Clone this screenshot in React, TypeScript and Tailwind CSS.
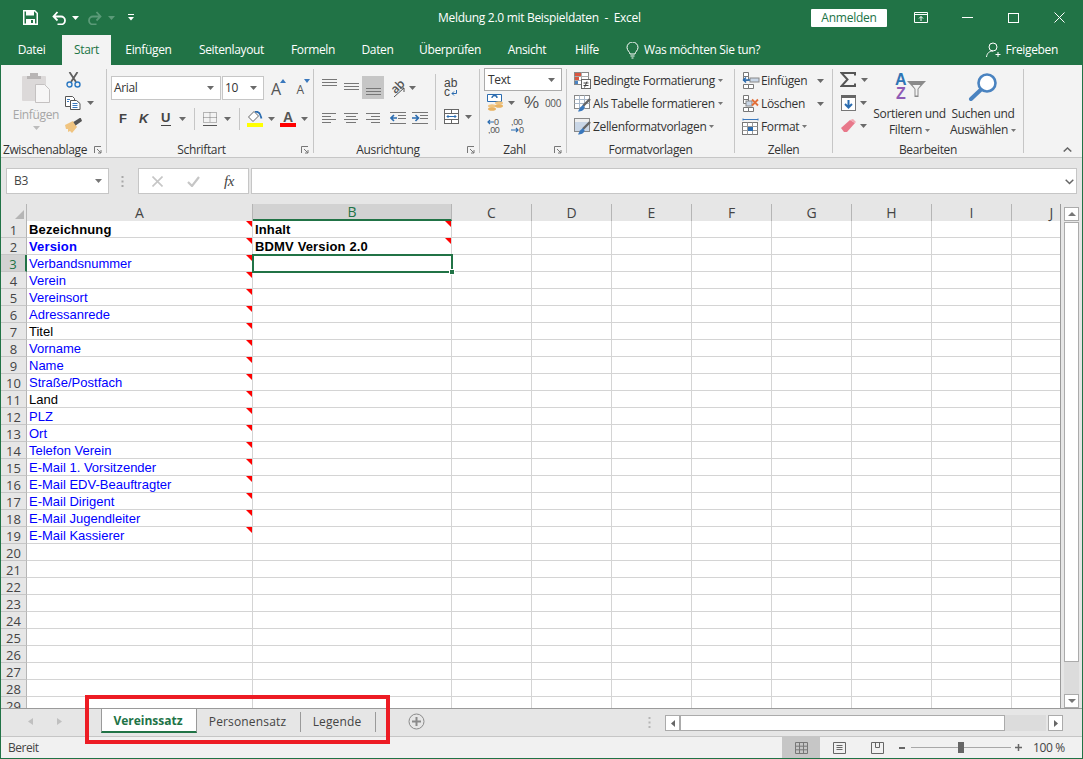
import type { ReactNode } from 'react'

const tabs = [
  { label: 'Datei', w: 'w-[61px]' },
  { label: 'Start', w: 'w-[49px]', active: true },
  { label: 'Einfügen', w: 'w-[75px]' },
  { label: 'Seitenlayout', w: 'w-[91px]' },
  { label: 'Formeln', w: 'w-[72px]' },
  { label: 'Daten', w: 'w-[57px]' },
  { label: 'Überprüfen', w: 'w-[88px]' },
  { label: 'Ansicht', w: 'w-[66px]' },
  { label: 'Hilfe', w: 'w-[54px]' },
]

const rows = [
  'Bezeichnung', 'Version', 'Verbandsnummer', 'Verein', 'Vereinsort', 'Adressanrede', 'Titel', 'Vorname', 'Name',
  'Straße/Postfach', 'Land', 'PLZ', 'Ort', 'Telefon Verein', 'E-Mail 1. Vorsitzender', 'E-Mail EDV-Beauftragter',
  'E-Mail Dirigent', 'E-Mail Jugendleiter', 'E-Mail Kassierer',
]

const otherCols = ['C', 'D', 'E', 'F', 'G', 'H', 'I', 'J']

function Caret({ color = '#6a6a6a', small }: { color?: string; small?: boolean }) {
  return (
    <svg width={small ? 5 : 7} height={small ? 3 : 4} viewBox="0 0 7 4" className="shrink-0">
      <polygon points="0,0 7,0 3.5,4" fill={color} />
    </svg>
  )
}

function Launcher() {
  return (
    <svg width="8" height="8" viewBox="0 0 8 8" className="shrink-0">
      <path d="M.5 7V.5H7M3 3l4 4M7 4v3H4" fill="none" stroke="#777" />
    </svg>
  )
}

function Sep() {
  return <div className="my-[4px] w-px shrink-0 bg-[#c6c6c6]" />
}

function Group({ w, label, launcher, children }: { w: string; label: string; launcher?: boolean; children: ReactNode }) {
  return (
    <div className={`flex shrink-0 flex-col ${w}`}>
      <div className="h-[76px]">{children}</div>
      <div className="flex h-[16px] items-center pt-[2px] text-[12px] leading-none text-[#333]">
        <span className="flex-1 text-center">{label}</span>
        {launcher && (
          <span className="flex w-[17px] justify-start pl-[5px]">
            <Launcher />
          </span>
        )}
      </div>
    </div>
  )
}

function LinesV({ y }: { y: number }) {
  return (
    <svg width="15" height="23" viewBox="0 0 15 23" className="shrink-0">
      <path d={`M0 ${y + 0.5}h15M0 ${y + 3.5}h15M0 ${y + 6.5}h15`} stroke="#777" />
    </svg>
  )
}

function LinesH({ d }: { d: string }) {
  return (
    <svg width="14" height="11" viewBox="0 0 14 11" className="shrink-0">
      <path d={d} stroke="#777" />
    </svg>
  )
}

function Indent({ flip }: { flip?: boolean }) {
  return (
    <svg width="16" height="12" viewBox="0 0 16 12" className="shrink-0">
      <path d="M0 .5h16M8 3.5h8M8 6.5h8M0 11.5h16" stroke="#777" />
      <path d={flip ? 'M0 6h6M3.5 3l3 3-3 3' : 'M7 6H1M4 3 1 6l3 3'} fill="none" stroke="#2b6cb0" strokeWidth="1.6" />
    </svg>
  )
}

function CondIcon() {
  return (
    <svg width="17" height="17" viewBox="0 0 17 17" className="shrink-0">
      <rect x=".5" y=".5" width="14" height="12" fill="#fff" stroke="#888" />
      <rect x="1" y="1" width="6" height="3" fill="#d9553f" />
      <rect x="1" y="4" width="4" height="4" fill="#d9553f" />
      <rect x="1" y="8" width="3" height="4" fill="#4a84c4" />
      <path d="M7.5.5v12M.5 4.5h14M.5 8.5h14" stroke="#aaa" />
      <rect x="7.5" y="7.5" width="9" height="9" fill="#fff" stroke="#666" />
      <path d="M9.5 11h5M9.5 13.5h5M13 9.5l-2.500 6" stroke="#444" />
    </svg>
  )
}

function TableIcon({ filled }: { filled?: boolean }) {
  return (
    <svg width="17" height="17" viewBox="0 0 17 17" className="shrink-0">
      <rect x=".5" y=".5" width="15" height="13" fill={filled ? '#c9d6e6' : '#fff'} stroke="#888" />
      {filled ? (
        <rect x="1" y="1" width="14" height="3" fill="#eee" />
      ) : (
        <path d="M5.500.5v13M10.500.5v13M.5 4.500h15M.5 8.500h15" stroke="#a9b8c9" />
      )}
      <path d="M16 4 9 11" stroke="#666" strokeWidth="2.400" />
      <path d="M9 10l-3 2.500L4 16.500c3 0 6-1 6.500-4z" fill="#3a78bd" />
    </svg>
  )
}

function CellsIcon({ kind }: { kind: 'add' | 'del' | 'fmt' }) {
  return (
    <svg width="18" height="17" viewBox="0 0 18 17" className="shrink-0">
      {kind === 'fmt' ? (
        <>
          <path d="M1 1.500h15M1 .5v2M16 .5v2" stroke="#3a78bd" />
          <rect x=".5" y="4.500" width="15" height="12" fill="#fff" stroke="#777" />
          <path d="M5.500 4.500v12M10.500 4.500v12M.5 8.500h15M.5 12.500h15" stroke="#999" />
          <rect x="6" y="9" width="5" height="4" fill="#2b6cb0" />
        </>
      ) : (
        <>
          <path d="M1.500.5h5v4h-5zM1.500 4.500h5v4h-5zM1.500 12.500h5v4h-5zM6.500 12.500h5v4h-5z" fill="#fff" stroke="#777" />
          {kind === 'add' ? (
            <>
              <rect x="8" y="6" width="9" height="4" fill="#c9d6e6" stroke="#888" />
              <path d="M8 8H1.500M4 5.500 1.500 8 4 10.500" fill="none" stroke="#2b6cb0" strokeWidth="1.500" />
            </>
          ) : (
            <>
              <rect x="4" y="6" width="6" height="5" fill="#c9d6e6" stroke="#888" />
              <path d="M10 4.500l6 6M16 4.500l-6 6" stroke="#e2703a" strokeWidth="1.800" />
            </>
          )}
        </>
      )}
    </svg>
  )
}

function TitleBar() {
  return (
    <div className="flex h-[35px] shrink-0 items-center bg-[#217346] text-white">
      <div className="flex w-[437px] shrink-0 items-center">
        <svg width="15" height="15" viewBox="0 0 15 15" className="ml-[22px]">
          <path d="M.75.75h11l2.5 2.5v11H.75z" fill="none" stroke="#fff" strokeWidth="1.5" />
          <path d="M3 1h8v4.500H3zM3 9h9v5H3z" fill="#fff" />
          <rect x="8" y="10" width="2" height="3" fill="#217346" />
        </svg>
        <svg width="15" height="14" viewBox="0 0 15 14" className="ml-[14px]">
          <path d="M1.500 5.500H9a4 4 0 0 1 0 8H5.500M5.500 1 1.500 5.500l4 4" fill="none" stroke="#fff" strokeWidth="1.800" />
        </svg>
        <span className="ml-[5px]">
          <Caret color="#ffffff" />
        </span>
        <svg width="15" height="14" viewBox="0 0 15 14" className="ml-[8px]">
          <path d="M13.500 5.500H6a4 4 0 0 0 0 8h3.500M9.500 1l4 4.500-4 4" fill="none" stroke="#5b9a78" strokeWidth="1.800" />
        </svg>
        <span className="ml-[6px]">
          <Caret color="#5b9a78" />
        </span>
        <svg width="6" height="7" viewBox="0 0 6 7" className="ml-[13px]">
          <path d="M0 .5h6" stroke="#fff" />
          <polygon points="0,3 6,3 3,6.5" fill="#fff" />
        </svg>
      </div>
      <div className="w-[373px] shrink-0 text-[12px] tracking-[-0.3px]">Meldung 2.0 mit Beispieldaten&nbsp; -&nbsp; Excel</div>
      <div className="flex h-[18px] w-[76px] shrink-0 items-center justify-center rounded-[1px] bg-white text-[12px] tracking-[-0.25px] text-[#217346]">Anmelden</div>
      <svg width="14" height="11" viewBox="0 0 14 11" className="ml-[27px]">
        <path d="M.5.5h13v10H.5zM.5 2.500h13M7 9V4.500M5 6.500l2-2 2 2" fill="none" stroke="#fff" />
      </svg>
      <div className="ml-[34px] h-px w-[11px] bg-white" />
      <div className="ml-[35px] h-[10px] w-[11px] border border-white" />
      <svg width="11" height="11" viewBox="0 0 11 11" className="ml-[35px]">
        <path d="M.5.5l10 10M10.500.5l-10 10" stroke="#fff" />
      </svg>
    </div>
  )
}

function TabRow() {
  return (
    <div className="flex h-[30px] shrink-0 items-stretch bg-[#217346] text-[12px] text-white">
      {tabs.map((t) => (
        <div
          key={t.label}
          className={`flex shrink-0 items-center justify-center ${t.w} ${t.active ? 'bg-[#f3f3f3] text-[#217346]' : ''}`}
        >
          {t.label}
        </div>
      ))}
      <div className="ml-[12px] flex items-center">
        <svg width="13" height="17" viewBox="0 0 13 17">
          <path d="M4 12c0-2-3-3.500-3-6.500a5.500 5.500 0 0 1 11 0C12 8.500 9 10 9 12zM4.500 14h4M5.500 16h2" fill="none" stroke="#fff" />
        </svg>
        <span className="ml-[5px]">Was möchten Sie tun?</span>
      </div>
      <div className="ml-auto flex items-center pr-[24px]">
        <svg width="16" height="16" viewBox="0 0 16 16">
          <circle cx="7" cy="5" r="4" fill="none" stroke="#fff" />
          <path d="M.5 15c.5-4 3-6 6.500-6M12 10v5M9.500 12.500h5" fill="none" stroke="#fff" />
        </svg>
        <span className="ml-[4px]">Freigeben</span>
      </div>
    </div>
  )
}

function Ribbon() {
  return (
    <div className="flex h-[92px] shrink-0 bg-[#f3f3f3] text-[12px] text-[#333]">
      <Group w="w-[105px]" label="Zwischenablage" launcher>
        <div className="flex">
          <div className="flex w-[63px] shrink-0 flex-col items-center pl-[7px] pt-[8px]">
            <svg width="29" height="30" viewBox="0 0 29 30">
              <rect x="0" y="3" width="24" height="25" rx="1" fill="#dcd9d9" />
              <path d="M8 3V0h8v3h3v3H5V3z" fill="#b8b5b5" />
              <path d="M13.500 11.500h9l5 5v13h-14z" fill="#f7f6f6" stroke="#c4c1c1" />
            </svg>
            <span className="mt-[3px] h-[16px] text-[#a6a6a6]">Einfügen</span>
            <span className="mt-[4px]">
              <Caret color="#bcbcbc" />
            </span>
          </div>
          <div className="flex flex-col pt-[3px]">
            <div className="flex h-[23px] items-center pl-[2px]">
              <svg width="15" height="16" viewBox="0 0 15 16">
                <path d="M3.500 0l6.500 10M11.500 0 5 10" stroke="#5f5f5f" strokeWidth="1.800" />
                <circle cx="3.500" cy="12.500" r="2.500" fill="none" stroke="#2b78c2" strokeWidth="1.400" />
                <circle cx="11.500" cy="12.500" r="2.500" fill="none" stroke="#2b78c2" strokeWidth="1.400" />
              </svg>
            </div>
            <div className="flex h-[23px] items-center pl-[1px]">
              <svg width="16" height="14" viewBox="0 0 16 14">
                <path d="M.5.500h7l2 2v8h-9z" fill="#fff" stroke="#555" />
                <path d="M5.500 4.500h6l3.500 3v6h-9.500z" fill="#fff" stroke="#555" />
                <path d="M7.500 7.500h5M7.500 9.500h5M7.500 11.500h5M2 3.500h3M2 5.500h2" stroke="#3a78bd" />
              </svg>
              <span className="ml-[6px]">
                <Caret />
              </span>
            </div>
            <div className="flex h-[23px] items-center pl-[1px]">
              <svg width="17" height="15" viewBox="0 0 17 15">
                <polygon points="0,7 8,3 12,9 7,15 5,13 3,14 3,11 1,11" fill="#f0c480" />
                <path d="M9 5l7-4.500M10 6.500 16.500 2" stroke="#555" strokeWidth="2.200" />
              </svg>
            </div>
          </div>
        </div>
      </Group>
      <Sep />
      <Group w="w-[206px]" label="Schriftart" launcher>
        <div className="mt-[11px] flex h-[24px] items-stretch pl-[4px]">
          <div className="flex w-[110px] items-center justify-between border border-[#c6c6c6] bg-white pl-[2px] pr-[6px] text-[12px]">
            Arial <Caret />
          </div>
          <div className="ml-px flex w-[42px] items-center justify-between border border-[#c6c6c6] bg-white pl-[2px] pr-[6px]">
            10 <Caret />
          </div>
          <div className="relative ml-[5px] w-[14px] text-center text-[16px] leading-[26px] text-[#555]">
            A
            <svg width="6" height="4" viewBox="0 0 6 4" className="absolute right-[-3px] top-[3px]">
              <polygon points="0,4 6,4 3,0" fill="#3a78bd" />
            </svg>
          </div>
          <div className="relative ml-[11px] w-[12px] text-center text-[12px] leading-[27px] text-[#555]">
            A
            <svg width="6" height="4" viewBox="0 0 6 4" className="absolute right-[-4px] top-[3px]">
              <polygon points="0,0 6,0 3,4" fill="#3a78bd" />
            </svg>
          </div>
        </div>
        <div className="mt-[7px] flex h-[23px] items-center">
          <span className="ml-[12px] w-[8px] font-['Liberation_Sans',sans-serif] text-[13px] font-bold text-[#444]">F</span>
          <span className="ml-[12px] w-[10px] font-['Liberation_Sans',sans-serif] text-[13px] font-bold italic text-[#444]">K</span>
          <span className="ml-[12px] w-[10px] border-b border-[#444] font-['Liberation_Sans',sans-serif] text-[13px] font-bold leading-[14px] text-[#444]">U</span>
          <span className="ml-[8px]">
            <Caret />
          </span>
          <div className="ml-[8px] h-[22px] w-px bg-[#c6c6c6]" />
          <svg width="14" height="14" viewBox="0 0 14 14" className="ml-[8px]">
            <path d="M.5.500h13v10h-13zM7 .500v10M.5 5.500h13" fill="none" stroke="#777" strokeDasharray="1 1" />
            <path d="M0 13.500h14" stroke="#555" />
          </svg>
          <span className="ml-[7px]">
            <Caret />
          </span>
          <div className="ml-[8px] h-[22px] w-px bg-[#c6c6c6]" />
          <div className="ml-[7px] flex w-[16px] flex-col items-center">
            <svg width="16" height="12" viewBox="0 0 16 12">
              <path d="M7 .500 1.500 6 6 10.500 11.500 5z" fill="#fff" stroke="#666" />
              <path d="M8 .500c3 0 5 2 5.500 4l1 3" fill="none" stroke="#2b6cb0" strokeWidth="1.800" />
            </svg>
            <div className="h-[4px] w-[16px] bg-[#ffff00]" />
          </div>
          <span className="ml-[5px]">
            <Caret />
          </span>
          <div className="ml-[5px] flex w-[16px] flex-col items-center">
            <span className="h-[13px] font-['Liberation_Sans',sans-serif] text-[14px] font-bold leading-[14px] text-[#555]">A</span>
            <div className="h-[4px] w-[16px] bg-[#ff0000]" />
          </div>
          <span className="ml-[5px]">
            <Caret />
          </span>
        </div>
      </Group>
      <Sep />
      <Group w="w-[165px]" label="Ausrichtung" launcher>
        <div className="flex">
          <div className="w-[121px] shrink-0">
            <div className="mt-[11px] flex h-[23px] items-center">
              <span className="ml-[8px] flex">
                <LinesV y={3} />
              </span>
              <span className="ml-[7px] flex">
                <LinesV y={7} />
              </span>
              <div className="ml-[3px] flex h-[23px] w-[22px] items-center justify-center bg-[#c6c6c6]">
                <LinesV y={12} />
              </div>
              <div className="relative ml-[6px] h-[20px] w-[16px]">
                <span className="block origin-center -rotate-45 text-[12px] font-semibold leading-[15px] text-[#555]">ab</span>
                <svg width="16" height="12" viewBox="0 0 16 12" className="absolute left-0 top-[8px]">
                  <path d="M4 11 14 2M10 2h4v4" fill="none" stroke="#555" />
                </svg>
              </div>
              <span className="ml-[3px]">
                <Caret />
              </span>
            </div>
            <div className="mt-[8px] flex h-[22px] items-center">
              <span className="ml-[8px] flex">
                <LinesH d="M0 .5h14M0 3.500h9M0 6.500h14M0 9.500h9" />
              </span>
              <span className="ml-[8px] flex">
                <LinesH d="M0 .5h14M2 3.500h10M0 6.500h14M2 9.500h10" />
              </span>
              <span className="ml-[8px] flex">
                <LinesH d="M0 .5h14M5 3.500h9M0 6.500h14M5 9.500h9" />
              </span>
              <span className="ml-[10px] flex">
                <Indent />
              </span>
              <span className="ml-[6px] flex">
                <Indent flip />
              </span>
            </div>
          </div>
          <div className="mt-[9px] h-[56px] w-px bg-[#c6c6c6]" />
          <div className="pl-[8px]">
            <div className="mt-[14px] flex h-[18px] w-[15px] flex-col font-['Liberation_Sans',sans-serif] text-[12px] leading-[9px] tracking-normal text-[#444]">
              <span className="h-[9px]">ab</span>
              <div className="flex h-[9px] items-center">
                c
                <svg width="6" height="6" viewBox="0 0 6 6" className="ml-px">
                  <path d="M5.500 0v3.500H1M3 1.500l-2 2 2 2" fill="none" stroke="#2b6cb0" />
                </svg>
              </div>
            </div>
            <div className="mt-[12px] flex items-center">
              <svg width="15" height="15" viewBox="0 0 15 15">
                <rect x=".5" y=".5" width="14" height="14" fill="#fff" stroke="#666" />
                <path d="M.5 4.500h14M.5 10.500h14M7.500.5v4M7.500 10.500v4" stroke="#666" />
                <path d="M3 7.500h9M4.500 6 3 7.500 4.500 9M10.500 6 12 7.500 10.500 9" fill="none" stroke="#2b6cb0" />
              </svg>
              <span className="ml-[6px]">
                <Caret />
              </span>
            </div>
          </div>
        </div>
      </Group>
      <Sep />
      <Group w="w-[86px]" label="Zahl" launcher>
        <div className="ml-[4px] mt-[3px] flex h-[23px] w-[78px] items-center justify-between border border-[#ababab] bg-white pl-[3px] pr-[6px]">
          Text <Caret />
        </div>
        <div className="flex h-[23px] items-center">
          <svg width="17" height="17" viewBox="0 0 17 17" className="ml-[7px]">
            <path d="M.5.5h14v7H.5z" fill="#fff" stroke="#2b6cb0" />
            <path d="M5 4a2.500 2.500 0 0 1 5 0" fill="none" stroke="#2b6cb0" strokeWidth="1.400" />
            <ellipse cx="12" cy="9" rx="4" ry="1.800" fill="#f0c480" />
            <ellipse cx="5" cy="12" rx="4" ry="1.800" fill="#f0c480" />
            <ellipse cx="5" cy="15" rx="4" ry="1.800" fill="#e8b363" />
            <ellipse cx="12" cy="12" rx="4" ry="1.800" fill="#e8b363" />
          </svg>
          <span className="ml-[4px]">
            <Caret />
          </span>
          <span className="ml-[9px] w-[13px] font-['Liberation_Sans',sans-serif] text-[17px] leading-none text-[#555]">%</span>
          <span className="ml-[8px] text-[10px] leading-none text-[#555]">000</span>
        </div>
        <div className="flex h-[23px] items-center">
          <svg width="15" height="16" viewBox="0 0 15 16" className="ml-[7px]">
            <text x="7" y="7" fontSize="9" fontFamily="Liberation Sans" fill="#555">0</text>
            <text x="1" y="15" fontSize="9" fontFamily="Liberation Sans" fill="#555">,00</text>
            <path d="M7 4H1M3 2 1 4l2 2" fill="none" stroke="#2b6cb0" strokeWidth="1.200" />
          </svg>
          <svg width="15" height="16" viewBox="0 0 15 16" className="ml-[8px]">
            <text x="1" y="7" fontSize="9" fontFamily="Liberation Sans" fill="#555">,00</text>
            <text x="9" y="15" fontSize="9" fontFamily="Liberation Sans" fill="#555">0</text>
            <path d="M1 12h7M6 10l2 2-2 2" fill="none" stroke="#2b6cb0" strokeWidth="1.200" />
          </svg>
        </div>
      </Group>
      <Sep />
      <Group w="w-[167px]" label="Formatvorlagen">
        <div className="flex flex-col pl-[7px] pt-[4px]">
          <div className="flex h-[23px] items-center gap-[2px]">
            <CondIcon />
            Bedingte Formatierung
            <span className="ml-px">
              <Caret color="#777" small />
            </span>
          </div>
          <div className="flex h-[23px] items-center gap-[2px]">
            <TableIcon />
            Als Tabelle formatieren
            <span className="ml-px">
              <Caret color="#777" small />
            </span>
          </div>
          <div className="flex h-[23px] items-center gap-[2px]">
            <TableIcon filled />
            Zellenformatvorlagen
            <span className="ml-px">
              <Caret color="#777" small />
            </span>
          </div>
        </div>
      </Group>
      <Sep />
      <Group w="w-[97px]" label="Zellen">
        <div className="flex flex-col pl-[7px] pt-[4px]">
          <div className="flex h-[23px] items-center">
            <CellsIcon kind="add" />
            <span className="ml-[1px] w-[56px]">Einfügen</span>
            <Caret />
          </div>
          <div className="flex h-[23px] items-center">
            <CellsIcon kind="del" />
            <span className="ml-[1px] w-[56px]">Löschen</span>
            <Caret />
          </div>
          <div className="flex h-[23px] items-center">
            <CellsIcon kind="fmt" />
            <span className="ml-[1px]">Format</span>
            <span className="ml-[3px]">
              <Caret color="#777" small />
            </span>
          </div>
        </div>
      </Group>
      <Sep />
      <Group w="w-[190px]" label="Bearbeiten">
        <div className="flex">
          <div className="flex w-[40px] shrink-0 flex-col pl-[7px] pt-[3px]">
            <div className="flex h-[23px] items-center">
              <svg width="16" height="15" viewBox="0 0 16 15">
                <path d="M15 3.500V1H1.500l6 6.500-6 6.500H15v-2.500" fill="none" stroke="#555" strokeWidth="2" />
              </svg>
              <span className="ml-[5px]">
                <Caret />
              </span>
            </div>
            <div className="flex h-[23px] items-center">
              <svg width="15" height="16" viewBox="0 0 15 16" className="ml-px">
                <rect x=".5" y=".5" width="14" height="15" fill="#fff" stroke="#777" />
                <rect x="0" y="0" width="15" height="3" fill="#666" />
                <path d="M7.500 5v7M4 9l3.500 3.500L11 9" fill="none" stroke="#2b6cb0" strokeWidth="2" />
              </svg>
              <span className="ml-[4px]">
                <Caret />
              </span>
            </div>
            <div className="flex h-[23px] items-center">
              <svg width="15" height="14" viewBox="0 0 15 14" className="ml-px">
                <polygon points="0,9 9,1 14,4 6,13 3,13" fill="#e8788a" />
                <polygon points="9,1 12,0 15,3 14,4" fill="#f2a7b2" />
              </svg>
              <span className="ml-[4px]">
                <Caret />
              </span>
            </div>
          </div>
          <div className="flex w-[73px] shrink-0 flex-col items-center pt-[8px]">
            <div className="relative ml-[2px] h-[28px] w-[31px] font-['Liberation_Sans',sans-serif] text-[16px] font-bold leading-[14px] tracking-normal">
              <span className="block h-[14px] text-[#2f75b5]">A</span>
              <span className="block h-[14px] pl-px text-[#8e5bb5]">Z</span>
              <svg width="19" height="17" viewBox="0 0 19 17" className="absolute right-0 top-[8px]">
                <path d="M0 0h19l-7.500 8v8h-4V8z" fill="#8a8a8a" />
                <path d="M8.500 8v6.500h2V8l3-4h-8z" fill="#f3f3f3" />
              </svg>
            </div>
            <span className="mt-[5px] h-[16px] whitespace-nowrap leading-[16px]">Sortieren und</span>
            <span className="flex h-[16px] items-center gap-[3px] leading-[16px]">
              Filtern <Caret color="#777" small />
            </span>
          </div>
          <div className="ml-px flex w-[72px] shrink-0 flex-col items-center pt-[8px]">
            <svg width="30" height="28" viewBox="0 0 30 28">
              <circle cx="19" cy="10" r="8.500" fill="#fff" stroke="#4a83c0" strokeWidth="2.600" />
              <path d="M12.500 17 3 26" stroke="#4a83c0" strokeWidth="4" strokeLinecap="round" />
            </svg>
            <span className="mt-[5px] h-[16px] whitespace-nowrap leading-[16px]">Suchen und</span>
            <span className="flex h-[16px] items-center gap-[3px] leading-[16px]">
              Auswählen <Caret color="#777" small />
            </span>
          </div>
        </div>
      </Group>
      <Sep />
      <div className="flex flex-1 items-end justify-end pb-[5px] pr-[10px]">
        <svg width="9" height="5" viewBox="0 0 9 5">
          <path d="M.7 4.500 4.500 1l3.800 3.500" fill="none" stroke="#666" strokeWidth="1.500" />
        </svg>
      </div>
    </div>
  )
}

function FormulaBar() {
  return (
    <div className="flex h-[47px] shrink-0 items-start border-t border-[#c6c6c6] bg-[#e6e6e6] pt-[10px] text-[12px]">
      <div className="ml-[5px] flex h-[26px] w-[103px] items-center justify-between border border-[#c6c6c6] bg-white pl-[7px] pr-[6px] text-[#444]">
        B3 <Caret color="#777" />
      </div>
      <svg width="3" height="11" viewBox="0 0 3 11" className="ml-[12px] mt-[8px]">
        <path d="M1.500 0v2M1.500 4.500v2M1.500 9v2" stroke="#a8a8a8" strokeWidth="2" />
      </svg>
      <div className="ml-[14px] flex h-[26px] w-[111px] items-center border border-[#c6c6c6] bg-white">
        <svg width="11" height="11" viewBox="0 0 11 11" className="ml-[13px]">
          <path d="M.5.5l10 10M10.500.5l-10 10" stroke="#c6c6c6" strokeWidth="1.600" />
        </svg>
        <svg width="13" height="11" viewBox="0 0 13 11" className="ml-[24px]">
          <path d="M1 6l4 4 7-9" fill="none" stroke="#c6c6c6" strokeWidth="2.200" />
        </svg>
        <span className="ml-[24px] font-['Liberation_Serif',serif] text-[15px] italic leading-none text-[#444]">fx</span>
      </div>
      <div className="ml-[2px] h-[26px] w-[826px] border border-[#c6c6c6] bg-white" />
      <svg width="9" height="6" viewBox="0 0 9 6" className="ml-[-12px] mt-[11px]">
        <path d="M.7.7 4.500 4.500 8.300.7" fill="none" stroke="#666" strokeWidth="1.500" />
      </svg>
    </div>
  )
}

function CommentMark() {
  return (
    <svg width="6" height="6" viewBox="0 0 6 6" className="absolute right-0 top-0">
      <polygon points="0,0 6,0 6,6" fill="#ff0000" />
    </svg>
  )
}

function Sheet() {
  const nums = Array.from({ length: 29 }, (_, i) => i + 1)
  return (
    <div className="flex min-h-0 flex-1 border-b border-[#9a9a9a]">
      <div className="w-[1060px] shrink-0 overflow-hidden border-r border-[#9a9a9a] font-['Liberation_Sans',sans-serif] text-[13px] tracking-normal text-black">
        <div className="flex h-[17px] bg-[#e6e6e6] font-['Open_Sans',sans-serif] text-[14px] leading-none text-[#444]">
          <div className="flex w-[26px] shrink-0 items-end justify-end border-r border-[#b5b5b5] pb-[2px] pr-[2px]">
            <svg width="9" height="9" viewBox="0 0 9 9">
              <polygon points="9,0 9,9 0,9" fill="#b5b5b5" />
            </svg>
          </div>
          <div className="flex w-[226px] shrink-0 items-center justify-center border-r border-[#b5b5b5] pt-px">A</div>
          <div className="flex w-[199px] shrink-0 items-center justify-center border-b-2 border-r border-b-[#217346] border-r-[#b5b5b5] bg-[#d2d2d2] text-[#217346]">B</div>
          {otherCols.map((c) => (
            <div key={c} className="flex w-[80px] shrink-0 items-center justify-center border-r border-[#b5b5b5] pt-px">
              {c}
            </div>
          ))}
        </div>
        {nums.map((n) => {
          const label = rows[n - 1]
          const bold = n <= 2
          const black = n === 1 || label === 'Titel' || label === 'Land'
          return (
            <div key={n} className="flex h-[17px]">
              <div
                className={`flex w-[26px] shrink-0 items-center justify-center border-b border-b-[#c6c6c6] pt-[2px] font-['Open_Sans',sans-serif] leading-none ${
                  n === 3
                    ? 'border-r-2 border-r-[#217346] bg-[#d2d2d2] text-[#217346]'
                    : 'border-r border-r-[#b5b5b5] bg-[#e6e6e6] text-[#444]'
                }`}
              >
                {n}
              </div>
              <div
                className={`relative w-[226px] shrink-0 whitespace-nowrap border-b border-r border-[#d4d4d4] pl-[2px] pt-px leading-[15px] ${
                  bold ? 'font-bold tracking-[0.15px]' : ''
                } ${black ? 'text-black' : 'text-[#0000ff]'}`}
              >
                {label}
                {label && <CommentMark />}
              </div>
              <div className="relative w-[199px] shrink-0 whitespace-nowrap border-b border-r border-[#d4d4d4] pl-[2px] pt-px font-bold leading-[15px] tracking-[0.15px]">
                {n === 1 && 'Inhalt'}
                {n === 2 && 'BDMV Version 2.0'}
                {n <= 2 && <CommentMark />}
                {n === 3 && (
                  <div className="absolute left-[-1px] top-[-1px] z-10 h-[19px] w-[201px] border-2 border-[#217346]">
                    <div className="absolute bottom-[-4px] right-[-4px] h-[6px] w-[6px] border border-white bg-[#217346]" />
                  </div>
                )}
              </div>
              {otherCols.map((c) => (
                <div key={c} className="w-[80px] shrink-0 border-b border-r border-[#d4d4d4]" />
              ))}
            </div>
          )
        })}
      </div>
      <div className="flex flex-1 flex-col bg-[#e6e6e6] pl-[3px] pr-[3px] pt-[3px]">
        <div className="flex h-[14px] w-[15px] items-center justify-center border border-[#ababab] bg-white">
          <svg width="8" height="4" viewBox="0 0 8 4">
            <polygon points="0,4 8,4 4,0" fill="#777" />
          </svg>
        </div>
        <div className="mt-px flex flex-1 flex-col bg-[#dcdcdc]">
          <div className="h-[440px] border border-[#ababab] bg-white" />
        </div>
        <div className="flex h-[14px] w-[15px] items-center justify-center border border-[#ababab] bg-white">
          <svg width="8" height="4" viewBox="0 0 8 4">
            <polygon points="0,0 8,0 4,4" fill="#777" />
          </svg>
        </div>
      </div>
    </div>
  )
}

function SheetTabs() {
  return (
    <div className="relative flex h-[28px] shrink-0 items-start border-b border-[#c6c6c6] bg-[#e6e6e6] text-[12px] tracking-[0.15px]">
      <div className="flex h-[24px] w-[100px] shrink-0 items-center">
        <svg width="5" height="7" viewBox="0 0 5 7" className="ml-[27px]">
          <polygon points="5,0 5,7 0,3.500" fill="#c0c0c0" />
        </svg>
        <svg width="5" height="7" viewBox="0 0 5 7" className="ml-[24px]">
          <polygon points="0,0 0,7 5,3.500" fill="#c0c0c0" />
        </svg>
      </div>
      <div className="flex h-[24px] w-[96px] shrink-0 items-center justify-center border-x border-b-2 border-x-[#9a9a9a] border-b-[#217346] bg-white pr-[2px] pt-px font-bold tracking-normal text-[#217346]">
        Vereinssatz
      </div>
      <div className="mt-[3px] flex h-[20px] w-[104px] shrink-0 items-center justify-center border-r border-[#9a9a9a] pr-[2px] text-[#444]">Personensatz</div>
      <div className="mt-[3px] flex h-[20px] w-[75px] shrink-0 items-center justify-center border-r border-[#9a9a9a] pr-[2px] text-[#444]">Legende</div>
      <svg width="17" height="17" viewBox="0 0 17 17" className="ml-[32px] mt-[4px]">
        <circle cx="8.500" cy="8.500" r="7.500" fill="none" stroke="#8a8a8a" />
        <path d="M8.500 4v9M4 8.500h9" stroke="#8a8a8a" strokeWidth="2" />
      </svg>
      <div className="ml-auto mr-[19px] mt-[6px] flex h-[16px] items-stretch">
        <svg width="3" height="11" viewBox="0 0 3 11" className="mt-[2px]">
          <path d="M1.500 0v2M1.500 4.500v2M1.500 9v2" stroke="#b5b5b5" strokeWidth="2" />
        </svg>
        <div className="ml-[14px] flex w-[15px] items-center justify-center border border-[#ababab] bg-white">
          <svg width="4" height="7" viewBox="0 0 4 7">
            <polygon points="4,0 4,7 0,3.500" fill="#666" />
          </svg>
        </div>
        <div className="w-[325px] border border-[#ababab] bg-white" />
        <div className="w-[41px] bg-[#dcdcdc]" />
        <div className="ml-[2px] flex w-[15px] items-center justify-center border border-[#ababab] bg-white">
          <svg width="4" height="7" viewBox="0 0 4 7">
            <polygon points="0,0 0,7 4,3.500" fill="#666" />
          </svg>
        </div>
      </div>
      {/* red annotation frame from the screenshot */}
      <div className="absolute left-[84px] top-[-14px] h-[49px] w-[305px] border-4 border-[#ed1c24]" />
    </div>
  )
}

function StatusBar() {
  return (
    <div className="flex h-[21px] shrink-0 items-stretch bg-[#f1f1f1] text-[12px] text-[#444]">
      <span className="flex items-center pl-[7px] tracking-[-0.5px]">Bereit</span>
      <div className="ml-auto flex w-[38px] items-center justify-center bg-[#c6c6c6]">
        <svg width="13" height="12" viewBox="0 0 13 12">
          <path d="M.5.5h12v11H.5zM4.500.5v11M8.500.5v11M.5 4.200h12M.5 7.800h12" fill="none" stroke="#777" />
        </svg>
      </div>
      <div className="flex w-[38px] items-center justify-center">
        <svg width="13" height="12" viewBox="0 0 13 12">
          <path d="M.5.5h12v11H.5zM3.500 3.500h6M3.500 5.500h6M3.500 7.500h6" fill="none" stroke="#666" />
        </svg>
      </div>
      <div className="flex w-[38px] items-center justify-center">
        <svg width="13" height="12" viewBox="0 0 13 12">
          <path d="M.5.5h12v11H.5zM4.500.5v5h4V.5" fill="none" stroke="#666" />
        </svg>
      </div>
      <div className="ml-[3px] flex items-center">
        <div className="h-[2px] w-[6px] bg-[#666]" />
        <div className="relative ml-[6px] h-px w-[100px] bg-[#a8a8a8]">
          <div className="absolute left-[47px] top-[-5px] h-[11px] w-[6px] bg-[#666]" />
        </div>
        <svg width="7" height="7" viewBox="0 0 7 7" className="ml-[4px]">
          <path d="M3.500 0v7M0 3.500h7" stroke="#666" strokeWidth="1.500" />
        </svg>
        <span className="ml-[11px] mr-[19px] w-[30px] whitespace-nowrap">100 %</span>
      </div>
    </div>
  )
}

export default function App() {
  return (
    <div className="flex h-[759px] w-[1083px] flex-col overflow-hidden border-x border-b border-[#217346] font-['Open_Sans','Noto_Sans',sans-serif] tracking-[-0.35px]">
      <TitleBar />
      <TabRow />
      <Ribbon />
      <FormulaBar />
      <Sheet />
      <SheetTabs />
      <StatusBar />
    </div>
  )
}
